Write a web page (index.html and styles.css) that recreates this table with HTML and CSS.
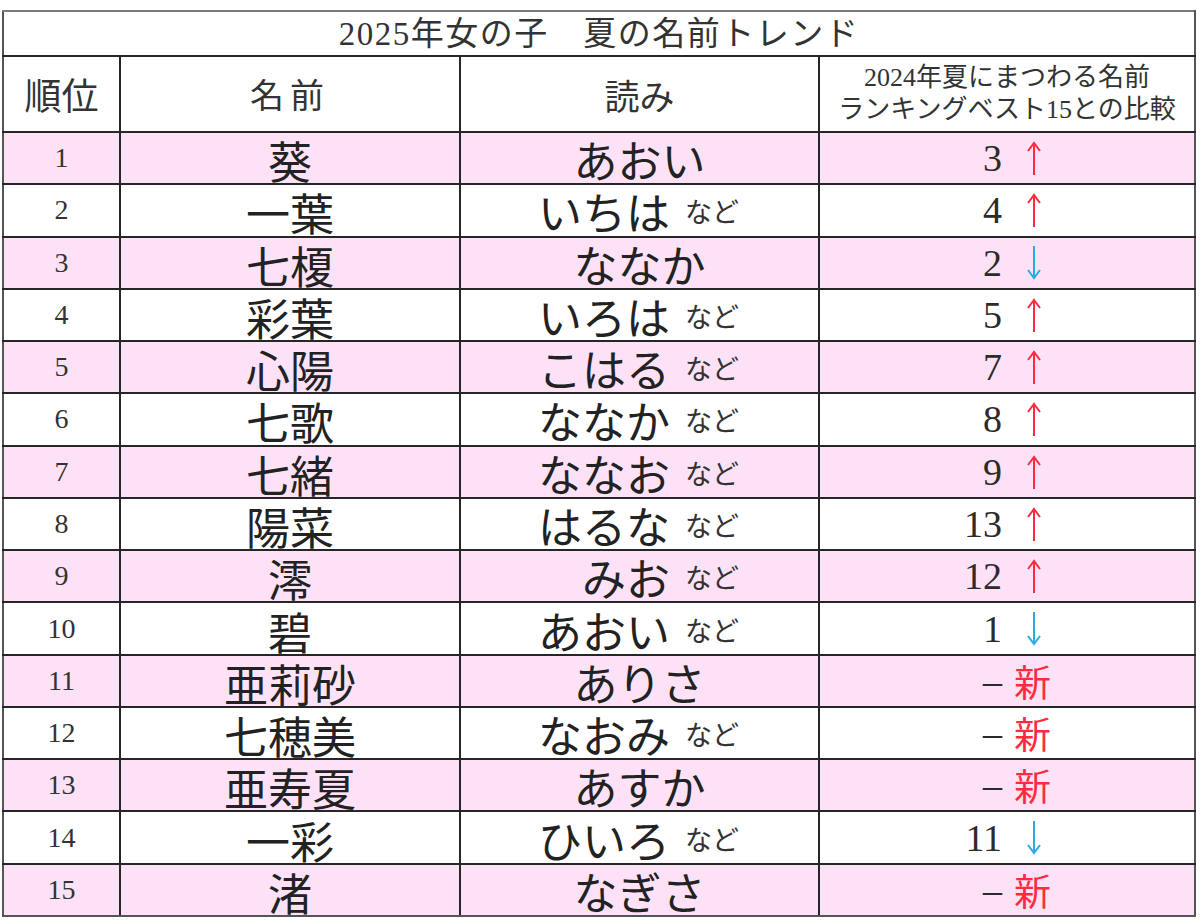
FILE: index.html
```html
<!DOCTYPE html>
<html lang="ja">
<head>
<meta charset="utf-8">
<link rel="stylesheet" href="styles.css">
</head>
<body>
<table class="rank">
  <colgroup>
    <col class="c1"><col class="c2"><col class="c3"><col class="c4">
  </colgroup>
  <tr class="title"><td colspan="4">2025年女の子　夏の名前トレンド</td></tr>
  <tr class="head">
    <td class="h-rank">順位</td>
    <td class="h-name">名前</td>
    <td class="h-yomi">読み</td>
    <td class="h-cmp">2024年夏にまつわる名前<br>ランキングベスト15との比較</td>
  </tr>
  <tr class="pink"><td class="no">1</td><td class="name">葵</td><td class="yomi">あおい</td><td class="cmp"><div class="cg"><span class="num">3</span><span class="mk"><svg class="arr up" viewBox="0 0 16 36"><path d="M8 3V35M2 11L8 3L14 11"/></svg></span></div></td></tr>
  <tr><td class="no">2</td><td class="name">一葉</td><td class="yomi"><div class="yg"><span class="yt">いちは</span><span class="nado">など</span></div></td><td class="cmp"><div class="cg"><span class="num">4</span><span class="mk"><svg class="arr up" viewBox="0 0 16 36"><path d="M8 3V35M2 11L8 3L14 11"/></svg></span></div></td></tr>
  <tr class="pink"><td class="no">3</td><td class="name">七榎</td><td class="yomi">ななか</td><td class="cmp"><div class="cg"><span class="num">2</span><span class="mk"><svg class="arr down" viewBox="0 0 16 36"><path d="M8 1V33M2 25L8 33L14 25"/></svg></span></div></td></tr>
  <tr><td class="no">4</td><td class="name">彩葉</td><td class="yomi"><div class="yg"><span class="yt">いろは</span><span class="nado">など</span></div></td><td class="cmp"><div class="cg"><span class="num">5</span><span class="mk"><svg class="arr up" viewBox="0 0 16 36"><path d="M8 3V35M2 11L8 3L14 11"/></svg></span></div></td></tr>
  <tr class="pink"><td class="no">5</td><td class="name">心陽</td><td class="yomi"><div class="yg"><span class="yt">こはる</span><span class="nado">など</span></div></td><td class="cmp"><div class="cg"><span class="num">7</span><span class="mk"><svg class="arr up" viewBox="0 0 16 36"><path d="M8 3V35M2 11L8 3L14 11"/></svg></span></div></td></tr>
  <tr><td class="no">6</td><td class="name">七歌</td><td class="yomi"><div class="yg"><span class="yt">ななか</span><span class="nado">など</span></div></td><td class="cmp"><div class="cg"><span class="num">8</span><span class="mk"><svg class="arr up" viewBox="0 0 16 36"><path d="M8 3V35M2 11L8 3L14 11"/></svg></span></div></td></tr>
  <tr class="pink"><td class="no">7</td><td class="name">七緒</td><td class="yomi"><div class="yg"><span class="yt">ななお</span><span class="nado">など</span></div></td><td class="cmp"><div class="cg"><span class="num">9</span><span class="mk"><svg class="arr up" viewBox="0 0 16 36"><path d="M8 3V35M2 11L8 3L14 11"/></svg></span></div></td></tr>
  <tr><td class="no">8</td><td class="name">陽菜</td><td class="yomi"><div class="yg"><span class="yt">はるな</span><span class="nado">など</span></div></td><td class="cmp"><div class="cg"><span class="num">13</span><span class="mk"><svg class="arr up" viewBox="0 0 16 36"><path d="M8 3V35M2 11L8 3L14 11"/></svg></span></div></td></tr>
  <tr class="pink"><td class="no">9</td><td class="name">澪</td><td class="yomi"><div class="yg"><span class="yt">みお</span><span class="nado">など</span></div></td><td class="cmp"><div class="cg"><span class="num">12</span><span class="mk"><svg class="arr up" viewBox="0 0 16 36"><path d="M8 3V35M2 11L8 3L14 11"/></svg></span></div></td></tr>
  <tr><td class="no">10</td><td class="name">碧</td><td class="yomi"><div class="yg"><span class="yt">あおい</span><span class="nado">など</span></div></td><td class="cmp"><div class="cg"><span class="num">1</span><span class="mk"><svg class="arr down" viewBox="0 0 16 36"><path d="M8 1V33M2 25L8 33L14 25"/></svg></span></div></td></tr>
  <tr class="pink"><td class="no">11</td><td class="name">亜莉砂</td><td class="yomi">ありさ</td><td class="cmp"><div class="cg"><span class="num">–</span><span class="mk"><span class="new">新</span></span></div></td></tr>
  <tr><td class="no">12</td><td class="name">七穂美</td><td class="yomi"><div class="yg"><span class="yt">なおみ</span><span class="nado">など</span></div></td><td class="cmp"><div class="cg"><span class="num">–</span><span class="mk"><span class="new">新</span></span></div></td></tr>
  <tr class="pink"><td class="no">13</td><td class="name">亜寿夏</td><td class="yomi">あすか</td><td class="cmp"><div class="cg"><span class="num">–</span><span class="mk"><span class="new">新</span></span></div></td></tr>
  <tr><td class="no">14</td><td class="name">一彩</td><td class="yomi"><div class="yg"><span class="yt">ひいろ</span><span class="nado">など</span></div></td><td class="cmp"><div class="cg"><span class="num">11</span><span class="mk"><svg class="arr down" viewBox="0 0 16 36"><path d="M8 1V33M2 25L8 33L14 25"/></svg></span></div></td></tr>
  <tr class="pink"><td class="no">15</td><td class="name">渚</td><td class="yomi">なぎさ</td><td class="cmp"><div class="cg"><span class="num">–</span><span class="mk"><span class="new">新</span></span></div></td></tr>
</table>
</body>
</html>
```

FILE: styles.css
```css
html, body {
  margin: 0;
  padding: 0;
  background: #ffffff;
}
body {
  padding: 10px 0 0 2px;
  font-family: "Liberation Serif", "Noto Sans CJK JP", serif;
  color: #2b2b2b;
}
.rank {
  border-collapse: collapse;
  table-layout: fixed;
  width: 1192px;
  border: 2px solid #6e6e6e;
}
.c1 { width: 117px; }
.c2 { width: 340px; }
.c3 { width: 359px; }
.c4 { width: 376px; }
.rank td {
  border: 2px solid #262626;
  padding: 0;
  text-align: center;
  vertical-align: middle;
  line-height: 1;
}
.rank tr.title td {
  border-top: 2px solid #7a7a7a;
  border-left: 2px solid #7a7a7a;
  border-right: 2px solid #7a7a7a;
}
.rank tr > td:first-child { border-left-color: #555; }
.rank tr > td:last-child { border-right-color: #555; }
.rank tr:last-child td { border-bottom-color: #555; }
.rank tr.title { height: 45px; }
.title td {
  font-size: 33px;
  letter-spacing: 1.5px;
  color: #333;
  padding-top: 1px;
}
.rank tr.head { height: 76px; }
.head td { color: #333; }
.h-rank { font-size: 37px; font-family: "Noto Sans CJK JP", sans-serif; }
.h-name { font-size: 34px; letter-spacing: 6px; font-family: "Noto Sans CJK JP", sans-serif; }
.h-yomi { font-size: 35px; font-family: "Noto Sans CJK JP", sans-serif; }
.rank td.h-cmp { font-size: 26px; letter-spacing: 0; line-height: 1.25; }
.rank tr.pink td { background: #fde2f7; }
.rank tr { height: 52.27px; }
.no {
  font-size: 28px;
  color: #333;
}
.rank td.name {
  font-size: 44px;
  line-height: 46px;
  font-family: "Noto Sans CJK JP", sans-serif;
  color: #222;
  padding-top: 4px;
}
.rank td.yomi {
  font-size: 44px;
  line-height: 46px;
  font-family: "Noto Sans CJK JP", sans-serif;
  color: #222;
  padding-top: 2px;
}
.yg {
  display: grid;
  grid-template-columns: 209px 1fr;
  align-items: center;
}
.yt { text-align: right; }
.nado {
  text-align: left;
  font-size: 27px;
  line-height: 30px;
  margin-left: 15px;
  color: #333;
}
.cg {
  display: grid;
  grid-template-columns: 182px 1fr;
  align-items: center;
}
.num {
  text-align: right;
  font-size: 38px;
  color: #2b2b2b;
}
.mk {
  text-align: left;
  display: flex;
  align-items: center;
}
.arr {
  width: 16px;
  height: 36px;
  margin-left: 24px;
  fill: none;
  stroke-width: 2;
}
.arr.up { stroke: #ff2b3c; }
.arr.down { stroke: #2aaae6; }
.new {
  font-family: "Noto Sans CJK JP", sans-serif;
  font-size: 37px;
  line-height: 40px;
  color: #ff2b3c;
  margin-left: 12px;
}
```
